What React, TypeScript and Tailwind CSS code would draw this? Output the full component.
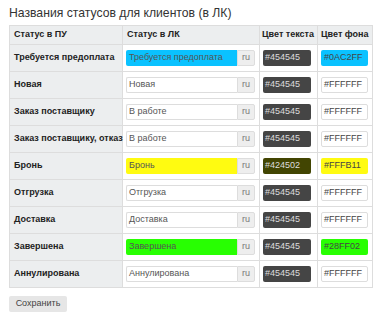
import React from "react";

type Row = {
  name: string;
  label: string;
  labelBg?: string;
  text: string;
  textBg: string;
  bg: string;
  bgColor?: string;
};

const ROWS: Row[] = [
  { name: "Требуется предоплата", label: "Требуется предоплата", labelBg: "bg-[#0AC2FF]", text: "#454545", textBg: "bg-[#454545]", bg: "#0AC2FF", bgColor: "bg-[#0AC2FF]" },
  { name: "Новая", label: "Новая", text: "#454545", textBg: "bg-[#454545]", bg: "#FFFFFF" },
  { name: "Заказ поставщику", label: "В работе", text: "#454545", textBg: "bg-[#454545]", bg: "#FFFFFF" },
  { name: "Заказ поставщику, отказ", label: "В работе", text: "#454545", textBg: "bg-[#454545]", bg: "#FFFFFF" },
  { name: "Бронь", label: "Бронь", labelBg: "bg-[#FFFB11]", text: "#424502", textBg: "bg-[#424502]", bg: "#FFFB11", bgColor: "bg-[#FFFB11]" },
  { name: "Отгрузка", label: "Отгрузка", text: "#454545", textBg: "bg-[#454545]", bg: "#FFFFFF" },
  { name: "Доставка", label: "Доставка", text: "#454545", textBg: "bg-[#454545]", bg: "#FFFFFF" },
  { name: "Завершена", label: "Завершена", labelBg: "bg-[#28FF02]", text: "#454545", textBg: "bg-[#454545]", bg: "#28FF02", bgColor: "bg-[#28FF02]" },
  { name: "Аннулирована", label: "Аннулирована", text: "#454545", textBg: "bg-[#454545]", bg: "#FFFFFF" },
];

export default function App() {
  return (
    <div className="min-h-[316px] bg-white px-[9px] pt-[5px] font-['Liberation_Sans',Arial,sans-serif] text-[#333]">
      <h1 className="text-[12.2px] leading-[16px]">Названия статусов для клиентов (в ЛК)</h1>

      <table className="mt-[4px] w-[363px] table-fixed border-collapse border border-[#ddd] text-[9px] text-[#222]">
        <colgroup>
          <col className="w-[113px]" />
          <col className="w-[137px]" />
          <col className="w-[58px]" />
          <col className="w-[55px]" />
        </colgroup>
        <thead>
          <tr className="h-[19px] bg-[#eceeef]">
            <th className="border border-[#ddd] px-[4px] text-left font-bold">Статус в ПУ</th>
            <th className="border border-[#ddd] px-[4px] text-left font-bold">Статус в ЛК</th>
            <th className="border border-[#ddd] px-[2px] text-left font-bold whitespace-nowrap">Цвет текста</th>
            <th className="border border-[#ddd] px-[3px] text-left font-bold whitespace-nowrap">Цвет фона</th>
          </tr>
        </thead>
        <tbody>
          {ROWS.map((row) => (
            <tr key={row.name} className="h-[27px]">
              <td className="border border-[#ddd] bg-[#eceeef] px-[4px] font-bold whitespace-nowrap">{row.name}</td>
              <td className="border border-[#ddd] py-0 pl-[3px] pr-[4px]">
                <div className="flex h-[16px]">
                  <div
                    className={`flex min-w-0 flex-1 items-center overflow-hidden whitespace-nowrap rounded-l-[2px] border border-r-0 px-[2px] text-[9px] text-[#555] ${
                      row.labelBg ? `${row.labelBg} border-transparent` : "border-[#ddd] bg-white"
                    }`}
                  >
                    {row.label}
                  </div>
                  <div className="flex w-[18px] items-center justify-center rounded-r-[2px] border border-[#ddd] bg-[#eee] text-[9px] text-[#777]">
                    ru
                  </div>
                </div>
              </td>
              <td className="border border-[#ddd] py-0 pl-[3px] pr-[6px]">
                <div className={`flex h-[16px] items-center rounded-[2px] px-[2px] text-[9px] text-[#ddd] ${row.textBg}`}>
                  {row.text}
                </div>
              </td>
              <td className="border border-[#ddd] py-0 pl-[3px] pr-[4px]">
                <div
                  className={`flex h-[16px] items-center rounded-[2px] border px-[2px] text-[9px] text-[#454545] ${
                    row.bgColor ? `${row.bgColor} border-transparent` : "border-[#ddd] bg-white"
                  }`}
                >
                  {row.bg}
                </div>
              </td>
            </tr>
          ))}
        </tbody>
      </table>

      <button className="mt-[8px] h-[16px] w-[58px] rounded-[2px] bg-[#e6e6e6] text-[9px] text-[#444]">Сохранить</button>
    </div>
  );
}
